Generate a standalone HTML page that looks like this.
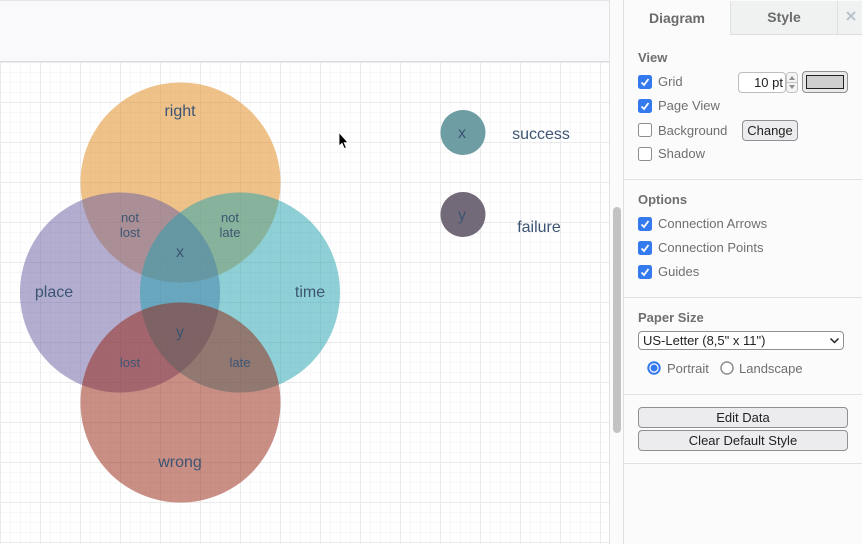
<!DOCTYPE html>
<html><head><meta charset="utf-8"><style>
html,body{margin:0;padding:0;width:862px;height:544px;overflow:hidden;background:#fff;font-family:"Liberation Sans",sans-serif}
.a{position:absolute;white-space:nowrap}
.toolbar{left:0;top:0;width:610px;height:61px;background:#f9f9fb;border-bottom:1px solid #dcdcdc;box-sizing:content-box}
.top{left:0;top:0;width:623px;height:1px;background:#e4e4e4}
.panel{left:623px;top:0;width:239px;height:544px;background:#fbfbfb;border-left:1px solid #dfdfdf;box-sizing:border-box}
.lab{font-size:13px;color:#6f6f6f;line-height:16px}
.h{font-size:13px;font-weight:bold;color:#6f6f70;line-height:16px}
.hr{left:624px;width:238px;height:1px;background:#e2e2e2}
.cb{left:638px;width:14px;height:14px;border-radius:2.5px;background:#3579ee;box-sizing:border-box}
.cb svg{position:absolute;left:0;top:0}
.cb.off{background:#fff;border:1.5px solid #8e8e93}
.btn{background:#ececee;border:1px solid #8f8f94;border-radius:4px;box-sizing:border-box;color:#222;font-size:13px;text-align:center}
</style></head><body>
<svg class="a" style="left:0;top:0" width="610" height="544" xmlns="http://www.w3.org/2000/svg">
<defs>
<pattern id="g" x="0" y="62" width="40" height="40" patternUnits="userSpaceOnUse">
<path d="M10.500 0V40M20.500 0V40M30.500 0V40M0 10.500H40M0 20.500H40M0 30.500H40" stroke="#f7f7fa" stroke-width="1" fill="none"/>
<path d="M.5 0V40M0 .5H40" stroke="#eaeaeb" stroke-width="1" fill="none"/>
</pattern>
</defs>
<rect x="0" y="62" width="610" height="482" fill="#fff"/>
<rect x="0" y="62" width="610" height="482" fill="url(#g)"/>
<circle cx="180.500" cy="182.500" r="100" fill="#df8515" fill-opacity=".5"/>
<circle cx="120" cy="292.500" r="100" fill="#675ba1" fill-opacity=".5"/>
<circle cx="240" cy="292.500" r="100" fill="#1fa1ad" fill-opacity=".5"/>
<circle cx="180.500" cy="402.500" r="100" fill="#931f0b" fill-opacity=".5"/>
<circle cx="463" cy="132.500" r="22.500" fill="#6e9da3"/>
<circle cx="463" cy="214.500" r="22.500" fill="#726a78"/>
<g font-family="Liberation Sans" fill="#3d5573" text-anchor="middle">
<text x="180" y="116" font-size="16">right</text>
<text x="54" y="297" font-size="16">place</text>
<text x="310" y="297" font-size="16">time</text>
<text x="180" y="467" font-size="16">wrong</text>
<text x="130" y="222" font-size="13">not</text>
<text x="130" y="237" font-size="13">lost</text>
<text x="230" y="222" font-size="13">not</text>
<text x="230" y="237" font-size="13">late</text>
<text x="180" y="257" font-size="16">x</text>
<text x="180" y="337" font-size="16">y</text>
<text x="130" y="367" font-size="13">lost</text>
<text x="240" y="367" font-size="13">late</text>
<text x="462" y="138" font-size="16">x</text>
<text x="462" y="220" font-size="16">y</text>
<text x="541" y="139" font-size="16">success</text>
<text x="539" y="232" font-size="16">failure</text>
</g>
<path d="M339 132.500V146L342 143.300L344.300 148.500L346.300 147.600L344.100 142.600H348Z" fill="#000" stroke="#fff" stroke-width=".8"/>
</svg>
<div class="a toolbar"></div>
<div class="a top"></div>
<div class="a" style="left:609px;top:0;width:1px;height:544px;background:#e2e2e2"></div>
<div class="a" style="left:610px;top:0;width:13px;height:544px;background:#fbfbfb"></div>
<div class="a" style="left:613px;top:207px;width:8px;height:226px;border-radius:4px;background:#c3c3c3"></div>
<div class="a panel"></div>
<div class="a" style="left:624px;top:0;width:106px;height:35px;background:#fbfbfb;font-size:14px;font-weight:bold;color:#6b6b6b;text-align:center;line-height:37px">Diagram</div>
<div class="a" style="left:730px;top:1px;width:107px;height:34px;background:#f0f1f1;border-left:1px solid #dfdfdf;border-bottom:1px solid #dfdfdf;box-sizing:border-box;font-size:14px;font-weight:bold;color:#6b6b6b;text-align:center;line-height:32px">Style</div>
<div class="a" style="left:837px;top:1px;width:25px;height:34px;background:#f0f1f1;border-left:1px solid #dfdfdf;border-bottom:1px solid #dfdfdf;box-sizing:border-box"></div>
<svg class="a" style="left:846px;top:11px" width="10" height="10"><path d="M1 1L9 9M9 1L1 9" stroke="#b9c4cc" stroke-width="2"/></svg>

<div class="a h" style="left:638px;top:50px">View</div>
<div class="a cb" style="top:75px"><svg width="14" height="14"><path d="M3.500 7.500L6 10L10.500 4" fill="none" stroke="#fff" stroke-width="1.800"/></svg></div>
<div class="a lab" style="left:658px;top:74px">Grid</div>
<div class="a cb" style="top:99px"><svg width="14" height="14"><path d="M3.500 7.500L6 10L10.500 4" fill="none" stroke="#fff" stroke-width="1.800"/></svg></div>
<div class="a lab" style="left:658px;top:98px">Page View</div>
<div class="a cb off" style="top:123px"></div>
<div class="a lab" style="left:658px;top:123px">Background</div>
<div class="a cb off" style="top:147px"></div>
<div class="a lab" style="left:658px;top:146px">Shadow</div>

<div class="a" style="left:738px;top:72px;width:48px;height:21px;background:#fff;border:1px solid #bdbdbd;border-radius:4px;box-sizing:border-box;font-size:13px;color:#222;text-align:right;padding-right:2px;line-height:20px">10 pt</div>
<svg class="a" style="left:786px;top:72px" width="13" height="21"><rect x=".5" y=".5" width="11" height="20" rx="3" fill="#f4f4f4" stroke="#c4c4c4"/><path d="M1 10.500H11" stroke="#c4c4c4"/><path d="M3 8L6 4L9 8Z" fill="#8f8f8f"/><path d="M3 13L6 17L9 13Z" fill="#8f8f8f"/></svg>
<div class="a" style="left:802px;top:71px;width:46px;height:22px;background:#e9e9ea;border:1px solid #8f8f94;border-radius:4px;box-sizing:border-box"></div>
<div class="a" style="left:806px;top:75px;width:38px;height:14px;background:#cfcfcf;border:1px solid #222;box-sizing:border-box"></div>
<div class="a btn" style="left:742px;top:120px;width:56px;height:21px;line-height:19px">Change</div>

<div class="a hr" style="top:179px"></div>
<div class="a h" style="left:638px;top:192px">Options</div>
<div class="a cb" style="top:217px"><svg width="14" height="14"><path d="M3.500 7.500L6 10L10.500 4" fill="none" stroke="#fff" stroke-width="1.800"/></svg></div>
<div class="a lab" style="left:658px;top:216px">Connection Arrows</div>
<div class="a cb" style="top:241px"><svg width="14" height="14"><path d="M3.500 7.500L6 10L10.500 4" fill="none" stroke="#fff" stroke-width="1.800"/></svg></div>
<div class="a lab" style="left:658px;top:240px">Connection Points</div>
<div class="a cb" style="top:265px"><svg width="14" height="14"><path d="M3.500 7.500L6 10L10.500 4" fill="none" stroke="#fff" stroke-width="1.800"/></svg></div>
<div class="a lab" style="left:658px;top:264px">Guides</div>

<div class="a hr" style="top:297px"></div>
<div class="a h" style="left:638px;top:310px">Paper Size</div>
<div class="a" style="left:638px;top:331px;width:206px;height:19px;background:#fff;border:1px solid #8f8f94;border-radius:4px;box-sizing:border-box;font-size:13px;color:#222;padding-left:4px;line-height:17px">US-Letter (8,5" x 11")</div>
<svg class="a" style="left:829px;top:337px" width="11" height="8"><path d="M1.500 1.500L5.500 5.500L9.500 1.500" fill="none" stroke="#222" stroke-width="1.500"/></svg>

<svg class="a" style="left:647px;top:361px" width="14" height="14"><circle cx="7" cy="7" r="5.700" fill="#fff" stroke="#3579ee" stroke-width="2"/><circle cx="7" cy="7" r="3.500" fill="#3579ee"/></svg>
<div class="a lab" style="left:667px;top:361px">Portrait</div>
<svg class="a" style="left:720px;top:361px" width="14" height="14"><circle cx="7" cy="7" r="6" fill="#fff" stroke="#8e8e93" stroke-width="1.500"/></svg>
<div class="a lab" style="left:739px;top:361px">Landscape</div>

<div class="a hr" style="top:394px"></div>
<div class="a btn" style="left:638px;top:407px;width:210px;height:21px;line-height:20px">Edit Data</div>
<div class="a btn" style="left:638px;top:430px;width:210px;height:21px;line-height:20px">Clear Default Style</div>
<div class="a hr" style="top:463px"></div>
</body></html>
